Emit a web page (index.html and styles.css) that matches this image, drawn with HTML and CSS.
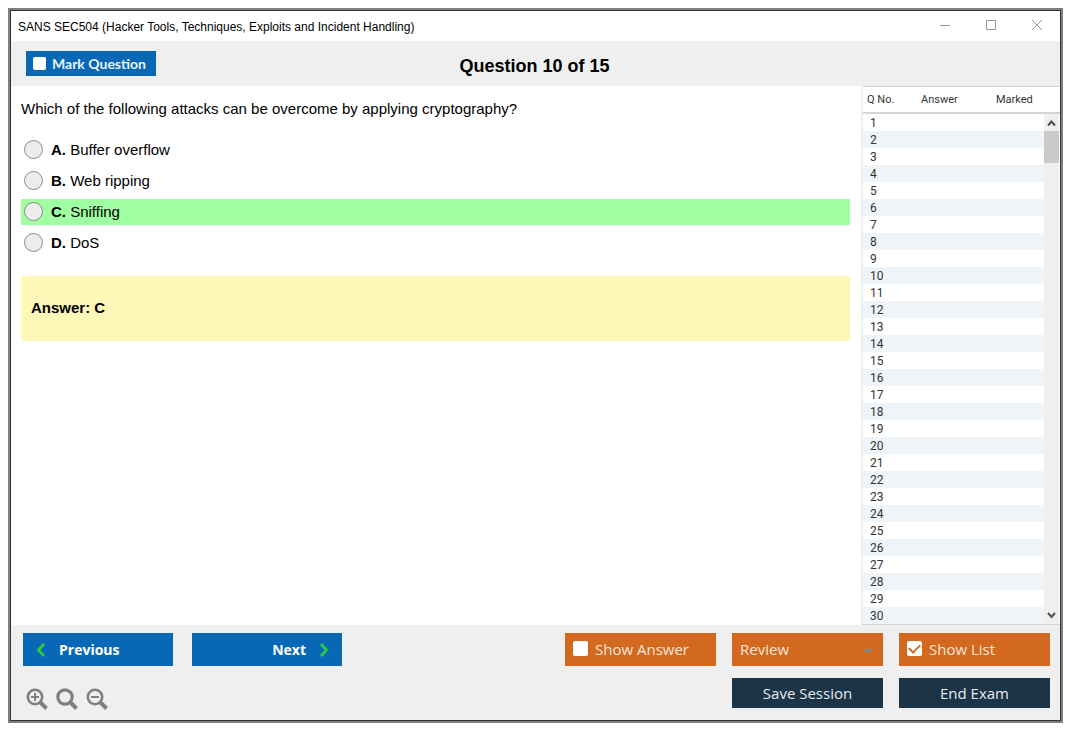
FILE: index.html
```html
<!DOCTYPE html>
<html lang="en">
<head>
    <meta charset="UTF-8">
    <meta name="viewport" content="width=device-width, initial-scale=1.0">
    <title>SANS SEC504</title>
    <link rel="stylesheet" href="styles.css">
</head>
<body>
    <div class="window">
        <div class="titlebar">
            <span class="title">SANS SEC504 (Hacker Tools, Techniques, Exploits and Incident Handling)</span>
            <div class="window-buttons">
                <button type="button" aria-label="Minimize">
                    <svg width="12" height="12" viewBox="0 0 12 12"><path d="M1 6.500h10" /></svg>
                </button>
                <button type="button" aria-label="Maximize">
                    <svg width="12" height="12" viewBox="0 0 12 12"><path d="M1.500 1.500h9v9h-9z" /></svg>
                </button>
                <button type="button" aria-label="Close">
                    <svg width="12" height="12" viewBox="0 0 12 12"><path d="M1 1l10 10M11 1L1 11" /></svg>
                </button>
            </div>
        </div>

        <header class="toolbar">
            <label class="mark"><input type="checkbox" class="check small"> Mark Question</label>
            <h1>Question 10 of 15</h1>
        </header>

        <main>
            <section class="question">
                <p class="question-text">Which of the following attacks can be overcome by applying cryptography?</p>
                <div class="options">
                    <label class="option"><input type="radio" name="answer" value="A"><span><b>A.</b> Buffer overflow</span></label>
                    <label class="option"><input type="radio" name="answer" value="B"><span><b>B.</b> Web ripping</span></label>
                    <label class="option correct"><input type="radio" name="answer" value="C"><span><b>C.</b> Sniffing</span></label>
                    <label class="option"><input type="radio" name="answer" value="D"><span><b>D.</b> DoS</span></label>
                </div>
                <div class="answer">Answer: C</div>
            </section>

            <aside class="list">
                <table>
                    <thead>
                        <tr>
                            <th class="col-no">Q No.</th>
                            <th class="col-answer">Answer</th>
                            <th>Marked</th>
                        </tr>
                    </thead>
                    <tbody id="questionList">
                        <!-- Question rows -->
                    </tbody>
                </table>
                <div class="scroll">
                    <div class="scroll-head"></div>
                    <div class="scroll-track">
                        <svg class="arrow" width="15" height="17" viewBox="0 0 15 17"><path d="M4 11.500L7.500 7.500l3.500 4" /></svg>
                        <div class="thumb"></div>
                        <svg class="arrow down" width="15" height="17" viewBox="0 0 15 17"><path d="M4 6l3.500 4L11 6" /></svg>
                    </div>
                </div>
            </aside>
        </main>

        <footer>
            <div class="row">
                <button type="button" class="btn blue prev">
                    <svg width="12" height="16" viewBox="0 0 12 16"><path d="M9 2L3.500 8 9 14" /></svg>
                    Previous
                </button>
                <button type="button" class="btn blue next">
                    Next
                    <svg width="12" height="16" viewBox="0 0 12 16"><path d="M3 2l5.500 6L3 14" /></svg>
                </button>
                <div class="right">
                    <label class="btn orange"><input type="checkbox" class="check"> Show Answer</label>
                    <div class="review">
                        <select class="btn orange" aria-label="Review">
                            <option>Review</option>
                        </select>
                        <svg width="10" height="5" viewBox="0 0 10 5"><path d="M0 5l5-5 5 5z" fill="#848484" /></svg>
                    </div>
                    <label class="btn orange"><input type="checkbox" class="check" id="showList" checked> Show List</label>
                </div>
            </div>
            <div class="row">
                <div class="zoom">
                    <button type="button" aria-label="Zoom in">
                        <svg width="22" height="22" viewBox="0 0 22 22"><circle cx="9" cy="9" r="7.200" /><path d="M14 14l6.500 6.500" stroke-width="4" /><path d="M5 9h8M9 5v8" stroke-width="2" /></svg>
                    </button>
                    <button type="button" aria-label="Reset zoom">
                        <svg width="22" height="22" viewBox="0 0 22 22"><circle cx="9" cy="9" r="7.200" stroke-width="3.200" /><path d="M14 14l6.500 6.500" stroke-width="4" /></svg>
                    </button>
                    <button type="button" aria-label="Zoom out">
                        <svg width="22" height="22" viewBox="0 0 22 22"><circle cx="9" cy="9" r="7.200" /><path d="M14 14l6.500 6.500" stroke-width="4" /><path d="M5 9h8" stroke-width="2" /></svg>
                    </button>
                </div>
                <div class="right">
                    <button type="button" class="btn navy">Save Session</button>
                    <button type="button" class="btn navy">End Exam</button>
                </div>
            </div>
        </footer>
    </div>

    <script>
        const questionList = document.getElementById('questionList');
        const showList = document.getElementById('showList');

        // Fill the question list
        for (let i = 1; i <= 30; i++) {
            const row = document.createElement('tr');
            row.innerHTML = `<td>${i}</td><td></td><td></td>`;
            questionList.appendChild(row);
        }

        showList.addEventListener('change', () => {
            document.querySelector('.list').hidden = !showList.checked;
        });
    </script>
</body>
</html>
```

FILE: styles.css
```css
* {
    box-sizing: border-box;
}
body {
    margin: 0;
    padding: 10px 14px 14px 10px;
    height: 100vh;
    background: white;
    color: black;
    font-family: "Liberation Sans", Arial, sans-serif;
    font-size: 15px;
}
button, label, select {
    cursor: pointer;
}
svg {
    display: block;
    fill: none;
}
.window {
    display: flex;
    flex-direction: column;
    height: 100%;
    border: 1px solid #333;
    outline: 2px solid #808080;
}
.titlebar {
    display: flex;
    justify-content: space-between;
    align-items: center;
    height: 30px;
    padding-left: 7px;
    font-size: 12px;
}
.title {
    padding-top: 2px;
}
.window-buttons {
    display: flex;
}
.window-buttons button {
    display: flex;
    justify-content: center;
    align-items: center;
    width: 46px;
    height: 30px;
    padding: 0 0 2px;
    border: none;
    background: none;
}
.window-buttons svg {
    stroke: #999;
}
.toolbar {
    display: grid;
    grid-template-columns: 1fr auto 1fr;
    align-items: center;
    height: 45px;
    padding: 0 17px 0 15px;
    background: #efefef;
}
.toolbar h1 {
    margin: 5px 0 0;
    font-size: 18px;
}
.mark {
    display: flex;
    align-items: center;
    justify-self: start;
    gap: 6px;
    width: 130px;
    height: 25px;
    padding-left: 7px;
    background: #0968b5;
    color: #e8f1f8;
    font-family: Lato, sans-serif;
    font-size: 14px;
    font-weight: bold;
}
main {
    display: flex;
    flex: 1;
    min-height: 0;
}
.question {
    flex: 1;
    padding: 14px 11px 0 10px;
}
.question-text {
    margin: 0 0 19px;
    line-height: 18px;
}
.options {
    display: flex;
    flex-direction: column;
    gap: 5px;
}
.option {
    display: flex;
    align-items: center;
    gap: 8px;
    height: 26px;
    padding: 0 0 2px 3px;
}
.option input {
    appearance: none;
    width: 19px;
    height: 19px;
    margin: 0;
    border: 1px solid #8c8c8c;
    border-radius: 50%;
    background: #ececec;
}
.option input:checked {
    background: radial-gradient(#333 40%, #ececec 45%);
}
.correct {
    background: #a0ffa0;
}
.answer {
    margin-top: 20px;
    padding: 23px 10px 24px;
    background: #fff7b8;
    line-height: 18px;
    font-weight: bold;
}
.list {
    display: flex;
    width: 199px;
    overflow: hidden;
    border-left: 2px solid #efefef;
    border-bottom: 1px solid #d5d5d5;
    font-family: Roboto, sans-serif;
    font-size: 12px;
}
.list[hidden] {
    display: none;
}
table {
    flex: 1;
    align-self: flex-start;
    table-layout: fixed;
    border-spacing: 0;
    color: #333;
}
th, td {
    padding: 0;
    text-align: left;
}
th, .scroll-head {
    height: 28px;
    border-top: 1px solid #d5d5d5;
    border-bottom: 2px solid #d5d5d5;
}
th {
    padding-left: 4px;
    font-size: 11px;
    font-weight: normal;
}
td {
    height: 17px;
    padding: 1px 0 0 7px;
    line-height: 16px;
}
tbody tr:nth-child(even) {
    background: #eff4f9;
}
.col-no {
    width: 54px;
}
.col-answer {
    width: 75px;
}
.scroll {
    display: flex;
    flex-direction: column;
    width: 16px;
}
.scroll-track {
    display: flex;
    flex-direction: column;
    flex: 1;
    width: 15px;
    background: #efefef;
}
.arrow {
    stroke: #505050;
    stroke-width: 2;
}
.down {
    margin-top: auto;
}
.thumb {
    height: 32px;
    background: #cacaca;
}
footer {
    display: flex;
    flex-direction: column;
    gap: 12px;
    padding: 8px 10px 12px 12px;
    background: #efefef;
}
.row {
    display: flex;
    align-items: center;
    gap: 19px;
}
.right {
    display: flex;
    gap: 16px;
    margin-left: auto;
}
.btn {
    display: flex;
    align-items: center;
    width: 151px;
    height: 33px;
    border: none;
    border-radius: 0;
    font-family: "Open Sans", sans-serif;
    font-size: 15px;
}
.blue {
    gap: 12px;
    width: 150px;
    padding: 0 12px;
    background: #0968b5;
    color: white;
    font-size: 14px;
    font-weight: bold;
}
.blue svg {
    stroke: #2bc840;
    stroke-width: 3;
}
.next {
    justify-content: flex-end;
}
.orange {
    gap: 7px;
    padding: 0 8px 2px;
    background: #d2691e;
    color: #f8e6da;
}
.navy {
    justify-content: center;
    height: 30px;
    background: #1b3448;
    color: #e8ebed;
}
.review {
    position: relative;
}
.review select {
    appearance: none;
}
.review svg {
    position: absolute;
    top: 14px;
    right: 10px;
    pointer-events: none;
}
.check {
    display: grid;
    place-content: center;
    appearance: none;
    width: 15px;
    height: 15px;
    margin: 0;
    border-radius: 2px;
    background: white;
}
.small {
    width: 13px;
    height: 13px;
}
.check:checked::before {
    content: "";
    width: 9px;
    height: 5px;
    margin-bottom: 3px;
    border-left: 2px solid #d2691e;
    border-bottom: 2px solid #d2691e;
    transform: rotate(-45deg);
}
.zoom {
    display: flex;
    gap: 8px;
    height: 30px;
    padding: 10px 0 0 3px;
}
.zoom button {
    padding: 0;
    border: none;
    background: none;
}
.zoom svg {
    stroke: #808080;
    stroke-width: 2.6;
}
```
